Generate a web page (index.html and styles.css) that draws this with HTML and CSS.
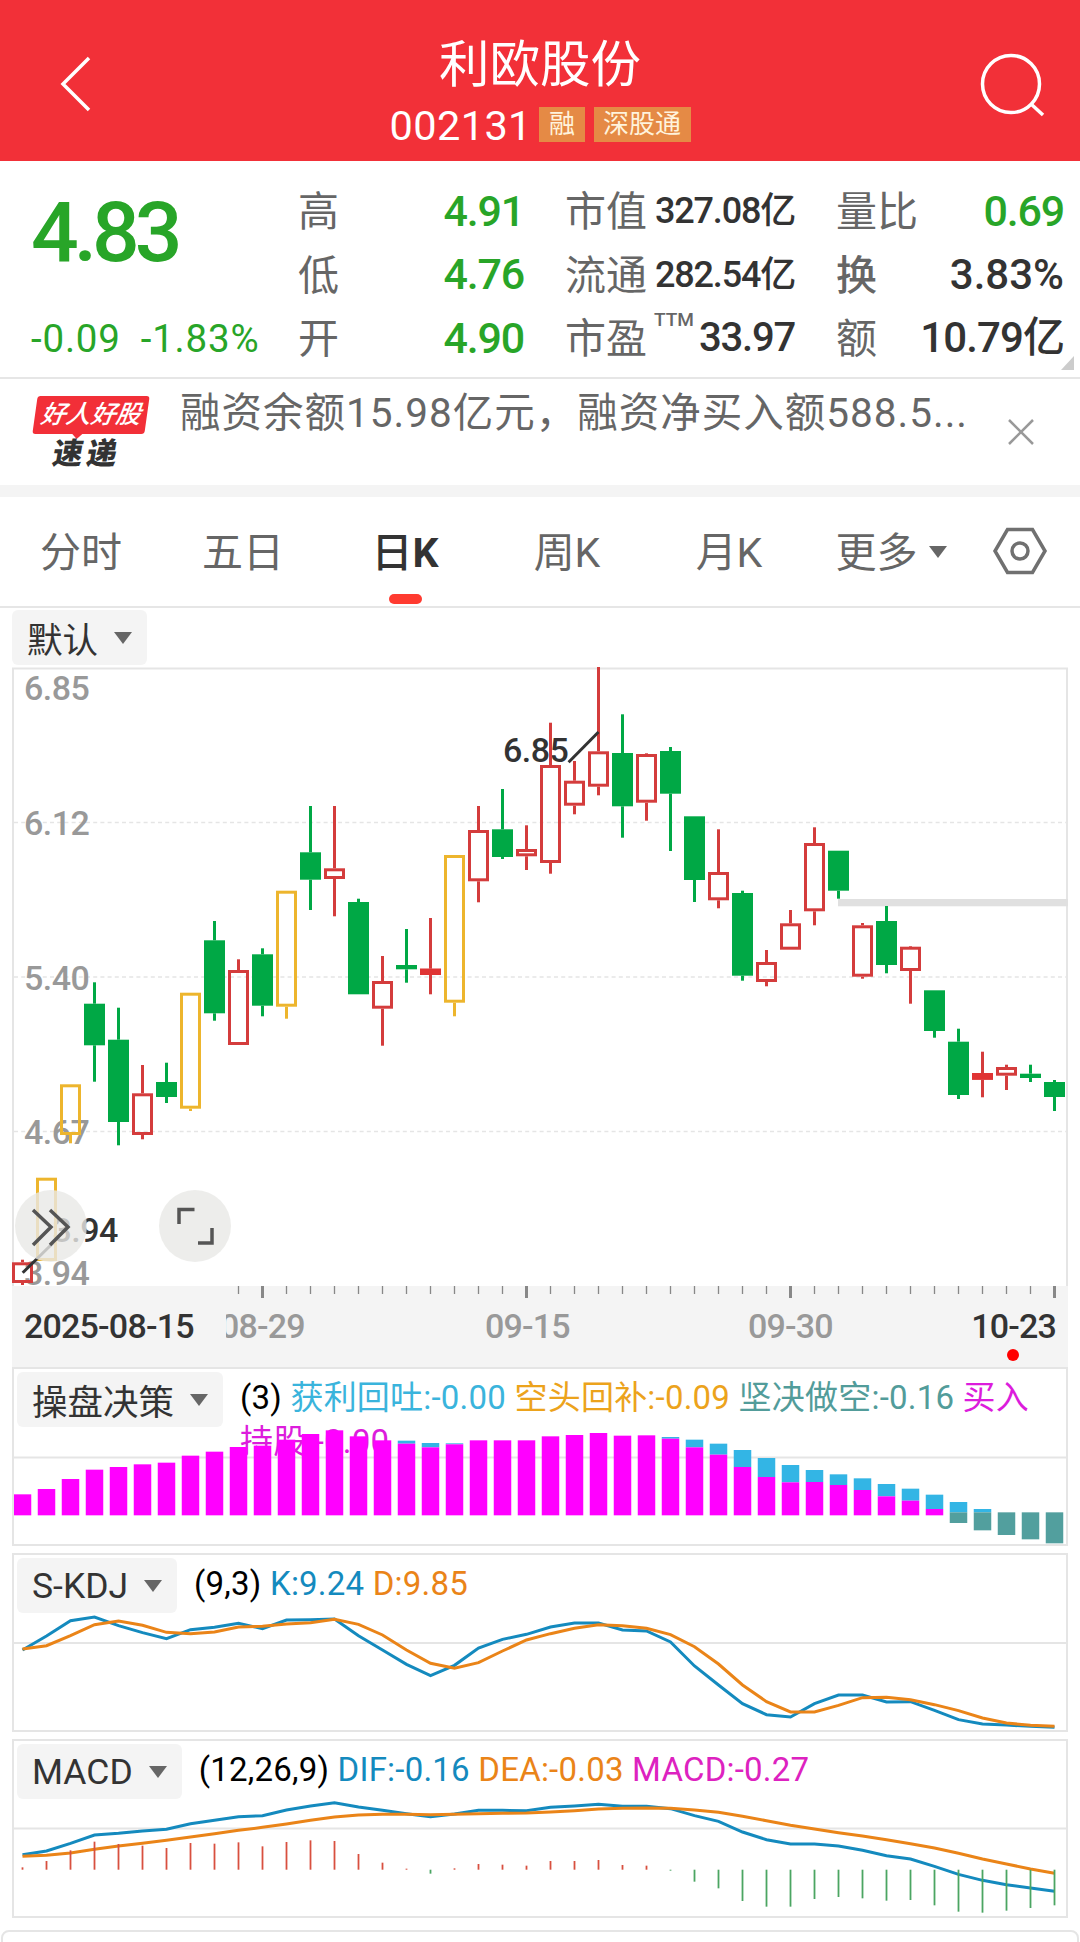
FILE: index.html
```html
<!DOCTYPE html>
<html lang="zh-CN">
<head>
  <meta charset="UTF-8">
  <meta name="viewport" content="width=device-width, initial-scale=1.0">
  <title>利欧股份 002131</title>
  <link rel="stylesheet" href="styles.css">
</head>
<body>
  <header class="topbar">
    <svg class="back" width="40" height="60" viewBox="0 0 40 60"><path d="M31 4 L5 30 L31 56" /></svg>
    <div class="stock">
      <h1>利欧股份</h1>
      <div class="code-row">
        <span class="code">002131</span>
        <span class="badge">融</span>
        <span class="badge">深股通</span>
      </div>
    </div>
    <svg class="search" width="68" height="68" viewBox="0 0 68 68"><circle cx="32" cy="32" r="28.5" /><path d="M52 52 L64 63" /></svg>
  </header>

  <section class="quote">
    <div class="price-box">
      <div class="price">4.83</div>
      <div class="change"><span>-0.09</span><span>-1.83%</span></div>
    </div>
    <dl class="col col-range">
      <div><dt>高</dt><dd class="down">4.91</dd></div>
      <div><dt>低</dt><dd class="down">4.76</dd></div>
      <div><dt>开</dt><dd class="down">4.90</dd></div>
    </dl>
    <dl class="col col-value">
      <div><dt>市值</dt><dd class="small">327.08亿</dd></div>
      <div><dt>流通</dt><dd class="small">282.54亿</dd></div>
      <div><dt>市盈<sup>TTM</sup></dt><dd class="mid">33.97</dd></div>
    </dl>
    <dl class="col col-volume">
      <div><dt>量比</dt><dd class="down">0.69</dd></div>
      <div><dt class="strong">换</dt><dd class="rate">3.83%</dd></div>
      <div><dt>额</dt><dd class="amount">10.79亿</dd></div>
    </dl>
    <i class="corner"></i>
  </section>

  <section class="news">
    <div class="news-logo">
      <span class="news-tag">好人好股</span>
      <span class="news-sub">速递</span>
    </div>
    <p>融资余额15.98亿元，融资净买入额588.5...</p>
    <svg class="close" width="28" height="28" viewBox="0 0 28 28"><path d="M2 2 L26 26 M26 2 L2 26" /></svg>
  </section>

  <nav class="tabs">
    <a>分时</a>
    <a>五日</a>
    <a class="active"><span>日</span>K</a>
    <a>周K</a>
    <a>月K</a>
    <a>更多<i class="arrow"></i></a>
    <svg class="settings" width="56" height="50" viewBox="0 0 56 50"><path d="M15.5 3.5 H40.5 L53 25 L40.5 46.5 H15.5 L3 25 Z" /><circle cx="28" cy="25" r="8" /></svg>
  </nav>

  <div class="overlay-row">
    <button class="picker">默认<i class="arrow"></i></button>
  </div>

  <section class="kline">
    <svg id="kline" width="1080" height="619" viewBox="0 667 1080 619"></svg>
    <button class="round next"><svg width="72" height="72" viewBox="0 0 72 72"><path d="M18 20 L36 37 L18 55 M35 20 L53 37 L35 55" /></svg></button>
    <button class="round full"><svg width="72" height="72" viewBox="0 0 72 72"><path d="M20 34 V19.500 H35.500 M39 53 H53 V38" /></svg></button>
  </section>

  <div class="axis">
    <svg id="ticks" width="1056" height="14" viewBox="12 1286 1056 14"></svg>
    <div class="dates">
      <b class="first">2025-08-15</b>
      <span class="d1"><span>08-29</span></span>
      <span class="d2">09-15</span>
      <span class="d3">09-30</span>
      <b class="last">10-23</b>
    </div>
    <i class="dot"></i>
  </div>

  <section class="pane pane-trade">
    <div class="pane-head">
      <button class="picker">操盘决策<i class="arrow"></i></button>
      <p class="values">(3) <span class="sky">获利回吐:-0.00</span> <span class="gold">空头回补:-0.09</span> <span class="teal">坚决做空:-0.16</span> <span class="pink">买入<br>持股:-0.00</span></p>
    </div>
    <svg id="trade" width="1052" height="175" viewBox="14 1369 1052 175"></svg>
  </section>

  <section class="pane pane-kdj">
    <div class="pane-head">
      <button class="picker">S-KDJ<i class="arrow"></i></button>
      <p class="values">(9,3) <span class="blue">K:9.24</span> <span class="orange">D:9.85</span></p>
    </div>
    <svg id="kdj" width="1052" height="175" viewBox="14 1555 1052 175"></svg>
  </section>

  <section class="pane pane-macd">
    <div class="pane-head">
      <button class="picker">MACD<i class="arrow"></i></button>
      <p class="values">(12,26,9) <span class="blue">DIF:-0.16</span> <span class="orange">DEA:-0.03</span> <span class="magenta">MACD:-0.27</span></p>
    </div>
    <svg id="macd" width="1052" height="175" viewBox="14 1741 1052 175"></svg>
  </section>

  <div class="next-card"></div>

  <script src="chart.js"></script>
</body>
</html>
```
FILE: styles.css
```css
* {
  box-sizing: border-box;
}

body {
  margin: 0;
  width: 1080px;
  height: 1942px;
  overflow: hidden;
  background: #fff;
  color: #333;
  font-family: Roboto, "Noto Sans CJK SC", sans-serif;
}

h1, p, dl, dd {
  margin: 0;
}

svg {
  display: block;
  fill: none;
}

button {
  border: none;
  padding: 0;
  color: inherit;
  font-family: inherit;
}

/* header */
.topbar {
  display: flex;
  justify-content: space-between;
  height: 161px;
  padding: 0 33px 0 58px;
  background: #f23038;
  color: #fff;
}

.topbar svg {
  stroke: #fff;
  stroke-width: 3.5;
}

.back {
  margin-top: 54px;
}

.search {
  margin-top: 52px;
}

.stock {
  padding: 35px 0 0 3px;
}

.stock h1 {
  font-size: 50.500px;
  font-weight: 400;
  line-height: 60px;
  text-align: center;
}

.code-row {
  display: flex;
  align-items: center;
  gap: 9px;
  margin-top: 9px;
  height: 40px;
}

.code {
  width: 141px;
  padding-top: 3px;
  font-size: 41.500px;
  letter-spacing: 0.4px;
}

.badge {
  height: 35px;
  padding: 0 9.500px;
  background: #e58a45;
  color: #fff3dc;
  font-size: 26px;
  line-height: 34px;
}

/* quote */
.quote {
  position: relative;
  display: grid;
  grid-template-columns: 298px 226px 228px 1fr;
  height: 218px;
  border-bottom: 2px solid #e6e6e6;
  padding-top: 17px;
}

.price-box {
  padding-left: 31px;
  color: #28a528;
  font-weight: 500;
}

.price {
  margin-top: 8px;
  font-size: 84px;
  line-height: 94px;
  letter-spacing: -5px;
}

.change {
  display: flex;
  gap: 20px;
  margin-top: 35px;
  font-size: 38.500px;
  line-height: 48px;
  font-weight: 400;
  letter-spacing: 0.8px;
}

.col > div {
  display: flex;
  justify-content: space-between;
  align-items: center;
  height: 63.5px;
}

.col dt {
  position: relative;
  padding-bottom: 3px;
  color: #666;
  font-size: 41px;
}

.col dt.strong {
  font-weight: 500;
}

.col dt sup {
  position: absolute;
  left: 89px;
  top: 5px;
  font-size: 19px;
  font-weight: 500;
  line-height: 20px;
}

.col dd {
  padding-top: 2px;
  font-size: 42px;
  font-weight: 500;
  letter-spacing: -1.2px;
}

.col dd.small {
  padding: 0 0 5px;
  font-size: 36px;
}

.col dd.mid {
  font-size: 40px;
}

.col dd.rate {
  letter-spacing: 0;
}

.col dd.amount {
  padding: 0 0 6px;
  letter-spacing: -0.9px;
}

.col dd.down {
  color: #28a528;
  font-size: 43px;
}

.col-value {
  margin-left: 41px;
  width: 230px;
}

.col-volume {
  margin-left: 84px;
  padding-right: 16px;
}

.corner {
  position: absolute;
  right: 6px;
  bottom: 7px;
  border-left: 13px solid transparent;
  border-bottom: 14px solid #ccc;
}

/* news */
.news {
  display: flex;
  height: 118px;
  border-bottom: 12px solid #f4f4f4;
}

.news-logo {
  position: relative;
  width: 148px;
  padding: 17px 0 0 35px;
}

.news-tag {
  display: block;
  width: 112px;
  height: 38px;
  border-radius: 3px;
  background: #f22f38;
  color: #fff;
  font-size: 25px;
  font-style: italic;
  font-weight: 500;
  line-height: 37px;
  text-align: center;
  transform: skewX(-8deg);
}

.news-tag::after {
  content: "";
  position: absolute;
  left: 39px;
  top: 37px;
  border: 6px solid transparent;
  border-top-color: #f22f38;
  border-bottom: none;
}

.news-sub {
  display: block;
  margin: 4px 0 0 18px;
  font-size: 30px;
  font-weight: 900;
  line-height: 32px;
  letter-spacing: 4px;
  transform: skewX(-10deg);
}

.news p {
  margin: 6px 0 0 32px;
  width: 820px;
  color: #666;
  font-size: 40.500px;
  line-height: 56px;
  letter-spacing: 1px;
  white-space: nowrap;
}

.close {
  margin: 39px 0 0 7px;
  stroke: #999;
  stroke-width: 2.5;
}

/* tabs */
.tabs {
  display: flex;
  height: 111px;
  border-bottom: 2px solid #e6e6e6;
}

.tabs a {
  position: relative;
  width: 162px;
  padding-top: 2px;
  color: #666;
  font-size: 41px;
  line-height: 109px;
  text-align: center;
  white-space: nowrap;
}

.tabs a.active {
  color: #333;
  font-weight: 700;
}

.tabs a.active span {
  font-weight: 500;
}

.tabs a.active::after {
  content: "";
  position: absolute;
  left: 65px;
  bottom: 2px;
  width: 33px;
  height: 10px;
  border-radius: 5px;
  background: #ff3b30;
}

.arrow {
  display: inline-block;
  border: 9px solid transparent;
  border-top: 12px solid #666;
  border-bottom: none;
}

.tabs .arrow {
  margin-left: 11px;
  vertical-align: 9px;
}

.settings {
  margin: 29px 0 0 20px;
  stroke: #707070;
  stroke-width: 3.5;
}

/* dropdown buttons */
.picker {
  display: flex;
  align-items: center;
  gap: 16px;
  flex: none;
  height: 55px;
  padding: 0 15px;
  border-radius: 6px;
  background: #f4f4f4;
  font-size: 35.500px;
}

.overlay-row {
  height: 59px;
  padding: 2px 0 0 12px;
}

/* k line chart */
.kline {
  position: relative;
  height: 619px;
}

.round {
  position: absolute;
  top: 523px;
  width: 72px;
  height: 72px;
  border-radius: 50%;
  background: rgba(233, 233, 230, 0.8);
}

.round svg {
  stroke: #555;
  stroke-width: 3.5;
}

.next {
  left: 15px;
}

.full {
  left: 159px;
}

.label,
.mark {
  font-size: 34px;
  font-weight: 500;
  letter-spacing: -0.5px;
}

.label {
  fill: #999;
}

.mark {
  fill: #333;
}

/* date axis */
.axis {
  position: relative;
  height: 81px;
  margin: 0 12px;
  background: #f4f4f4;
}

.dates {
  display: grid;
  grid-template-columns: 214px 195px 260px 270px 1fr;
  padding: 1px 12px 0;
  color: #999;
  font-size: 34px;
  font-weight: 500;
  line-height: 50px;
  letter-spacing: -0.8px;
}

.dates b {
  color: #333;
  font-weight: 500;
}

.dates .d1 {
  position: relative;
  left: -12px;
  overflow: hidden;
}

.dates .d1 span {
  margin-left: -6px;
}

.dates .d2 {
  padding-left: 52px;
}

.dates .d3 {
  padding-left: 55px;
}

.dates .last {
  text-align: right;
}

.dot {
  position: absolute;
  left: 995px;
  top: 63px;
  width: 12px;
  height: 12px;
  border-radius: 50%;
  background: #f00;
}

/* indicator panes */
.pane {
  position: relative;
  height: 179px;
  margin: 0 12px 7px;
  border: 2px solid #e5e5e5;
}

.pane > svg {
  position: absolute;
  left: 0;
  top: 0;
}

.pane-head {
  display: flex;
  padding: 3px 0 0 3px;
}

.values {
  margin: 4px 0 0 17px;
  color: #000;
  font-size: 33px;
  line-height: 44px;
  letter-spacing: 0.22px;
  white-space: nowrap;
}

.sky { color: #3ab4dc; }
.gold { color: #eca31c; }
.teal { color: #529c9a; }
.pink { color: #dc1cdc; }
.blue { color: #148abe; }
.orange { color: #ea8418; }
.magenta { color: #dd22c0; }

.next-card {
  height: 20px;
  margin: 12px 1px 0;
  border: 2px solid #e5e5e5;
  border-radius: 8px;
}
```
FILE: chart.js
```js
const NS = 'http://www.w3.org/2000/svg';
const RED = '#d43c3c';
const GREEN = '#00a845';
const YELLOW = '#edb52d';

// centre of the n-th trading day
const x = (n) => 22.5 + n * 24;

function add(id, tag, attrs, text) {
  const el = document.createElementNS(NS, tag);
  Object.keys(attrs).forEach((k) => el.setAttribute(k, attrs[k]));
  if (text) el.textContent = text;
  document.getElementById(id).appendChild(el);
}

function line(id, x1, y1, x2, y2, stroke, width, dash) {
  const attrs = { x1, y1, x2, y2, stroke, 'stroke-width': width };
  if (dash) attrs['stroke-dasharray'] = dash;
  add(id, 'line', attrs);
}

function rect(id, left, top, width, height, fill) {
  add(id, 'rect', { x: left, y: top, width, height, fill });
}

function curve(id, values, color, base) {
  const points = values.map((v, n) => `${x(n)},${base + v / 3}`).join(' ');
  add(id, 'polyline', { points, stroke: color, 'stroke-width': 3 });
}

// colour, high, body top, body bottom, low
const candles = [
  ['r', 1259.7, 1262.3, 1283, 1285],
  ['y', 1177.7, 1177.7, 1261, 1261],
  ['y', 1084.3, 1084.3, 1135, 1143.3],
  ['g', 982.3, 1003.7, 1045.3, 1081.7],
  ['g', 1007.7, 1039.7, 1122, 1145.3],
  ['r', 1065, 1093.3, 1135, 1139.3],
  ['g', 1062.7, 1082, 1097, 1103],
  ['y', 992.7, 992.7, 1108.7, 1111],
  ['g', 921, 940.3, 1013.3, 1020.7],
  ['r', 959.3, 970, 1045, 1045],
  ['g', 948.3, 954.3, 1005.7, 1016.3],
  ['y', 890.7, 890.7, 1006.7, 1018.7],
  ['g', 806, 852.3, 879.7, 910],
  ['r', 806, 868.3, 879, 916.3],
  ['g', 898.7, 902, 994.3, 994.3],
  ['r', 956, 981, 1008.7, 1045.7],
  ['g', 929, 965, 969.3, 982.7],
  ['r', 918, 968.7, 975, 994.3],
  ['y', 855, 855, 1002.7, 1016.3],
  ['r', 806, 830, 881.3, 902.3],
  ['g', 789, 829.3, 857, 859],
  ['r', 825.3, 849, 856.3, 870],
  ['r', 722.7, 765, 863, 873.7],
  ['r', 761, 780.7, 805.7, 814.3],
  ['r', 667, 751.3, 786.7, 795.3],
  ['g', 714.3, 753, 806.3, 837.7],
  ['r', 753.3, 754, 802.7, 820.7],
  ['g', 747, 751, 793.7, 851],
  ['g', 816.3, 816.3, 880, 902],
  ['r', 829.3, 872, 900.3, 908.3],
  ['g', 890.7, 893, 975.7, 980.7],
  ['r', 950, 962, 982, 986.3],
  ['r', 910, 923.3, 949.7, 949.7],
  ['r', 827.3, 843, 911.3, 925.3],
  ['g', 850.7, 850.7, 890.7, 898.7],
  ['r', 923, 925.3, 976.7, 978.7],
  ['g', 906, 921, 965, 973.3],
  ['r', 946, 946.7, 971, 1003.7],
  ['g', 990.3, 990.3, 1031, 1037.7],
  ['g', 1028.7, 1041.7, 1095, 1099],
  ['r', 1051.7, 1073, 1079.7, 1097.3],
  ['r', 1064.7, 1067, 1075.7, 1090],
  ['g', 1064.7, 1073.7, 1078, 1082],
  ['g', 1080, 1082, 1097, 1111]
];

function drawKline() {
  const id = 'kline';
  line(id, 13, 668, 13, 1286, '#e5e5e5', 2);
  line(id, 1067, 668, 1067, 1286, '#e5e5e5', 2);
  line(id, 12, 668.5, 1068, 668.5, '#e5e5e5', 2);
  [822.5, 977, 1131.5].forEach((y) => line(id, 14, y, 1066, y, '#e5e5e5', 1.6, '4 3.2'));
  [['6.85', 699.7], ['6.12', 835.3], ['5.40', 990.3], ['4.67', 1144.3], ['3.94', 1285.3]].forEach(
    ([t, y]) => add(id, 'text', { x: 24, y, class: 'label' }, t)
  );

  // price gap
  rect(id, 838, 899, 230, 7.3, '#e0e0e0');

  add(id, 'text', { x: 503, y: 762.3, class: 'mark' }, '6.85');
  add(id, 'text', { x: 52.5, y: 1242.3, class: 'mark' }, '3.94');

  candles.forEach(([type, high, top, bottom, low], n) => {
    const color = { r: RED, g: GREEN, y: YELLOW }[type];
    line(id, x(n), high, x(n), top, color, 3);
    line(id, x(n), bottom, x(n), low, color, 3);
    if (type === 'g') {
      rect(id, x(n) - 10.5, top, 21, bottom - top, color);
    } else {
      add(id, 'rect', {
        x: x(n) - 9, y: top + 1.5, width: 18, height: bottom - top - 3,
        stroke: color, 'stroke-width': 3
      });
    }
  });
  rect(id, x(17) - 10.5, 968.7, 21, 6.3, '#e03434');
  rect(id, x(40) - 10.5, 1073, 21, 6.7, '#e03434');

  line(id, 568.6, 762.3, 598.5, 732, '#333', 3);
  line(id, 22.7, 1272.7, 53, 1243, '#333', 3);
}

function drawTicks() {
  for (let n = 9; n < 44; n++) {
    const major = (n - 10) % 11 === 0;
    line('ticks', x(n), 1286, x(n), major ? 1298 : 1294, '#888', major ? 3 : 1.3);
  }
}

// top of the blue bar, top of the pink bar
const trade = [
  403, 387, 357, 329, 321, 313, 308, 287, 275, 261, 257, 239, 222, 211, 229, 241,
  [242, 251], [249, 262], [250, 253], 241, 241, 241, 229, 225, 219, 227, 226,
  [231, 236], [239, 262], [251, 284], [270, 321], [294, 351], [315, 367], [330, 366],
  [343, 375], [355, 390], [372, 409], [386, 422], [404, 447]
];
const shorts = [[426, 489], [447, 511], [457, 525], [457, 538], [457, 550]];

function drawTrade() {
  const id = 'trade';
  const y = (v) => 1360 + v / 3;
  line(id, 14, 1457.5, 1066, 1457.5, '#e5e5e5', 2);
  trade.forEach((v, n) => {
    const [blue, pink] = Array.isArray(v) ? v : [v, v];
    const left = x(n) - 8.75;
    if (pink > blue) rect(id, left, y(blue), 17.5, y(pink) - y(blue), '#33b5e5');
    rect(id, left, y(pink), 17.5, y(466) - y(pink), '#f0f');
  });
  shorts.forEach(([top, bottom], i) => {
    const left = x(39 + i) - 8.75;
    rect(id, left, y(top), 17.5, y(457) - y(top), '#33b5e5');
    rect(id, left, y(457), 17.5, y(bottom) - y(457), '#529f9e');
  });
}

const k = [300, 258, 212, 201, 227, 248, 266, 239, 232, 220, 236, 210, 209, 207, 257, 300, 343, 377, 346, 294, 268, 253,
  231, 219, 219, 240, 243, 276, 348, 405, 461, 494, 501, 461, 435, 435, 456, 455, 481, 509, 522, 525, 529, 532];
const d = [297, 287, 257, 224, 213, 226, 247, 251, 246, 231, 229, 222, 218, 208, 223, 255, 300, 340, 355, 338, 303, 270,
  251, 235, 224, 227, 235, 254, 290, 342, 405, 455, 486, 486, 466, 443, 442, 449, 464, 482, 504, 519, 526, 529];

function drawKdj() {
  line('kdj', 14, 1643, 1066, 1643, '#e5e5e5', 2);
  curve('kdj', k, '#148abe', 1550);
  curve('kdj', d, '#ea8418', 1550);
}

const dif = [914, 903, 880, 855, 850, 843, 838, 821, 811, 800, 797, 780, 768, 758, 771, 781, 791, 800, 792, 781, 781, 782,
  772, 768, 763, 769, 769, 776, 797, 814, 846, 869, 882, 882, 888, 901, 917, 927, 949, 973, 991, 1004, 1014, 1024];
const dea = [919, 916, 909, 898, 888, 880, 871, 861, 851, 841, 832, 822, 811, 801, 795, 793, 793, 794, 793, 791, 790, 789,
  786, 782, 777, 775, 774, 775, 780, 787, 799, 812, 826, 837, 848, 858, 869, 881, 894, 910, 927, 942, 957, 970];
const hist = [952, 933, 901, 875, 882, 887, 894, 879, 881, 877, 889, 876, 871, 873, 912, 938, 956, 971, 955, 942, 944, 947,
  933, 933, 930, 945, 947, 962, 995, 1015, 1053, 1070, 1070, 1047, 1041, 1045, 1052, 1050, 1066, 1085, 1088, 1082, 1074, 1066];

function drawMacd() {
  line('macd', 14, 1828.5, 1066, 1828.5, '#e5e5e5', 2);
  curve('macd', dif, '#148abe', 1550);
  curve('macd', dea, '#ea8418', 1550);
  hist.forEach((v, n) => {
    line('macd', x(n), 1869.7, x(n), 1550 + v / 3, v < 959 ? '#d8503f' : '#4ba562', 1.8);
  });
}

drawKline();
drawTicks();
drawTrade();
drawKdj();
drawMacd();
```
